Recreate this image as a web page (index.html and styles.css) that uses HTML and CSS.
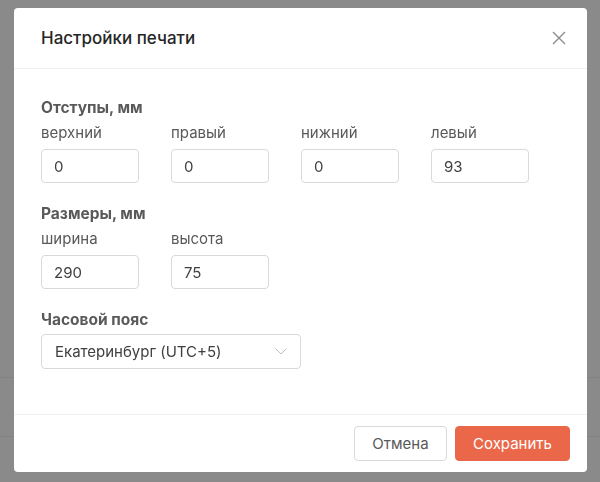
FILE: index.html
```html
<!DOCTYPE html>
<html lang="ru">
<head>
<meta charset="utf-8">
<title>Настройки печати</title>
<link rel="stylesheet" href="styles.css">
</head>
<body>
<div class="page">
  <div class="page-row"></div>
  <div class="page-row"></div>
</div>
<div class="overlay">
  <div class="modal">
    <div class="modal-header">
      <h1 class="modal-title">Настройки печати</h1>
      <button class="close-btn" aria-label="Закрыть">
        <svg width="14" height="14" viewBox="0 0 14 14"><path d="M1 1 L13 13 M13 1 L1 13" stroke="#8c8c8c" stroke-width="1.4" fill="none"/></svg>
      </button>
    </div>
    <div class="modal-body">
      <section class="group">
        <h2 class="group-title">Отступы, мм</h2>
        <div class="fields">
          <label class="field"><span class="field-label">верхний</span><span class="input">0</span></label>
          <label class="field"><span class="field-label">правый</span><span class="input">0</span></label>
          <label class="field"><span class="field-label">нижний</span><span class="input">0</span></label>
          <label class="field"><span class="field-label">левый</span><span class="input">93</span></label>
        </div>
      </section>
      <section class="group">
        <h2 class="group-title">Размеры, мм</h2>
        <div class="fields">
          <label class="field"><span class="field-label">ширина</span><span class="input">290</span></label>
          <label class="field"><span class="field-label">высота</span><span class="input">75</span></label>
        </div>
      </section>
      <section class="group">
        <h2 class="group-title">Часовой пояс</h2>
        <div class="select">
          <span>Екатеринбург (UTC+5)</span>
          <svg width="12" height="7" viewBox="0 0 12 7"><path d="M0.5 0.5 L6 6 L11.5 0.5" stroke="#bfbfbf" stroke-width="1" fill="none"/></svg>
        </div>
      </section>
    </div>
    <div class="modal-footer">
      <button class="btn btn-default">Отмена</button>
      <button class="btn btn-primary">Сохранить</button>
    </div>
  </div>
</div>
</body>
</html>
```
FILE: styles.css
```css
* { box-sizing: border-box; }
html, body { margin: 0; padding: 0; }
body {
  width: 600px;
  height: 482px;
  background: #fff;
  font-family: Inter, "Noto Sans", "Liberation Sans", sans-serif;
  overflow: hidden;
}
.page {
  padding-top: 377px;
}
.page-row {
  height: 59px;
  border-top: 1px solid #f0f0f0;
}
.overlay {
  position: fixed;
  inset: 0;
  background: rgba(0, 0, 0, 0.46);
  padding: 8px 13px 10px 14px;
  display: flex;
}
.modal {
  flex: 1;
  background: #fff;
  border-radius: 4px;
  display: flex;
  flex-direction: column;
}
.modal-header {
  height: 61px;
  border-bottom: 1px solid #f0f0f0;
  display: flex;
  align-items: center;
  justify-content: space-between;
  padding: 0 21px 0 27px;
}
.modal-title {
  margin: 0;
  font-size: 17px;
  font-weight: 500;
  color: #262626;
}
.close-btn {
  border: 0;
  background: none;
  padding: 0;
  width: 14px;
  height: 14px;
  display: flex;
}
.modal-body {
  flex: 1;
  padding: 28px 27px 0;
}
.group + .group { margin-top: 20px; }
.group-title {
  margin: 0;
  font-size: 15.5px;
  line-height: 22px;
  font-weight: 700;
  color: #595959;
}
.fields {
  display: flex;
  gap: 32px;
  margin-top: 3px;
}
.field {
  display: flex;
  flex-direction: column;
  width: 98px;
}
.field-label {
  font-size: 15px;
  line-height: 22px;
  color: #595959;
  margin-bottom: 5px;
}
.input {
  height: 34px;
  border: 1px solid #d9d9d9;
  border-radius: 4px;
  padding: 0 12px;
  font-size: 15px;
  color: #404040;
  display: flex;
  align-items: center;
}
.select {
  margin-top: 3px;
  width: 260px;
  height: 35px;
  border: 1px solid #d9d9d9;
  border-radius: 4px;
  padding: 0 13px 0 13px;
  font-size: 15px;
  color: #404040;
  display: flex;
  align-items: center;
  justify-content: space-between;
}
.modal-footer {
  border-top: 1px solid #f0f0f0;
  display: flex;
  justify-content: flex-end;
  gap: 8px;
  padding: 11px 17px 11px;
}
.btn {
  height: 35px;
  border-radius: 4px;
  font-family: inherit;
  font-size: 15px;
  padding: 0 17px;
}
.btn-default {
  width: 93px;
  background: #fff;
  border: 1px solid #d9d9d9;
  color: #595959;
}
.btn-primary {
  width: 115px;
  background: #ea6849;
  border: 1px solid #ea6849;
  color: #fff;
}
```
